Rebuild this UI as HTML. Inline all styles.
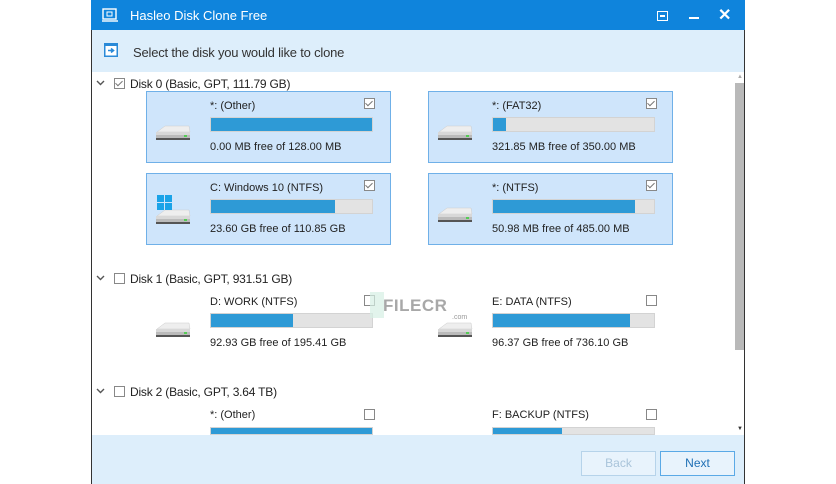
<!DOCTYPE html>
<html><head><meta charset="utf-8"><style>
*{margin:0;padding:0;box-sizing:border-box}
body{width:836px;height:484px;background:#fff;position:relative;overflow:hidden;font-family:"Liberation Sans",sans-serif;font-size:11px;color:#222}
.a{position:absolute}
.title{left:91px;top:0;width:654px;height:30px;background:#0f84dc;color:#fff;font-size:13px}
.hdr{left:92px;top:30px;width:652px;height:42px;background:#ddeefb}
.ftr{left:92px;top:435px;width:652px;height:49px;background:#ddeefb}
.card{width:245px;height:72px;background:#cfe5fb;border:1px solid #6fb0e8}
.bar{width:163px;height:15px;background:#e3e3e3;border:1px solid #d3d3d3}
.bar i{display:block;height:100%;background:#2e9ad6}
.cb{width:11px;height:11px;border:1px solid #888;background:#fff}
.cb.k::after{content:"";position:absolute;left:2px;top:0px;width:3px;height:6px;border:solid #777;border-width:0 1.3px 1.3px 0;transform:rotate(45deg)}
.btn{width:75px;height:25px;border:1px solid #5aa9e6;text-align:center;line-height:23px;font-size:12px;color:#1e6fb5;background:#e8f3fc}
.dh{font-size:12px;letter-spacing:-.2px}
</style></head><body>
<div class="a" style="left:91px;top:0;width:1px;height:484px;background:#333"></div>
<div class="a" style="left:744px;top:0;width:1px;height:484px;background:#333"></div>
<div class="a title">
 <svg class="a" style="left:11px;top:8px" width="16" height="14"><rect x="1" y="1" width="13" height="10" fill="none" stroke="#fff" stroke-width="1.4"/><rect x="5" y="4" width="5" height="4" fill="none" stroke="#fff"/><line x1="0" y1="13" x2="16" y2="13" stroke="#fff" stroke-width="1.4"/></svg>
 <span class="a" style="left:39px;top:8px">Hasleo Disk Clone Free</span>
 <svg class="a" style="left:566px;top:11px" width="11" height="10"><rect x="0.5" y="0.5" width="10" height="9" fill="none" stroke="#fff"/><rect x="3" y="4" width="5" height="2" fill="#fff"/></svg>
 <div class="a" style="left:598px;top:17px;width:10px;height:2px;background:#fff"></div>
 <span class="a" style="left:627px;top:5px;font-size:16px;font-weight:bold">✕</span>
</div>
<div class="a hdr">
 <svg class="a" style="left:12px;top:13px" width="14" height="14"><rect x="0" y="0" width="14" height="14" fill="#2a8ad8"/><rect x="1.5" y="3" width="11" height="9.5" fill="#fff"/><path d="M4 7.5h5M7 5.5l2.5 2-2.5 2" stroke="#2a8ad8" stroke-width="1.6" fill="none"/></svg>
 <span class="a" style="left:41px;top:15px;font-size:13px;color:#333;letter-spacing:-.2px">Select the disk you would like to clone</span>
</div>
<div class="a" style="left:735px;top:83px;width:9px;height:267px;background:#b9b9b9"></div>
<div class="a" style="left:737px;top:74px;font-size:6px;color:#aaa">▲</div>
<div class="a" style="left:737px;top:426px;font-size:6px;color:#333">▼</div>

<svg class="a" style="left:96px;top:80px" width="9" height="6"><path d="M1 1l3.5 3.5L8 1" stroke="#555" stroke-width="1.4" fill="none"/></svg>
<div class="a cb k" style="left:114px;top:78px"></div>
<div class="a dh" style="left:130px;top:77px">Disk 0 (Basic, GPT, 111.79 GB)</div>
<svg class="a" style="left:96px;top:275px" width="9" height="6"><path d="M1 1l3.5 3.5L8 1" stroke="#555" stroke-width="1.4" fill="none"/></svg>
<div class="a cb" style="left:114px;top:273px"></div>
<div class="a dh" style="left:130px;top:272px">Disk 1 (Basic, GPT, 931.51 GB)</div>
<svg class="a" style="left:96px;top:388px" width="9" height="6"><path d="M1 1l3.5 3.5L8 1" stroke="#555" stroke-width="1.4" fill="none"/></svg>
<div class="a cb" style="left:114px;top:386px"></div>
<div class="a dh" style="left:130px;top:385px">Disk 2 (Basic, GPT, 3.64 TB)</div>

<div class="a card" style="left:146px;top:91px"></div>
<div class="a card" style="left:428px;top:91px"></div>
<div class="a card" style="left:146px;top:173px"></div>
<div class="a card" style="left:428px;top:173px"></div>

<svg width="0" height="0" style="position:absolute"><defs><g id="hd"><path d="M2 7 L10 1 L34 1 L35 7 Z" fill="#eee" stroke="#ccc" stroke-width=".5"/><rect x="1" y="7" width="34" height="8" fill="#bbb"/><rect x="1" y="7" width="34" height="3" fill="#d8d8d8"/><rect x="1" y="13" width="34" height="2" fill="#555"/><rect x="29" y="10" width="3" height="2" fill="#5c5"/></g></defs></svg>

<div class="a" style="left:210px;top:100px">*: (Other)</div><div class="a cb k" style="left:364px;top:98px"></div>
<div class="a bar" style="left:210px;top:117px"><i style="width:100%"></i></div><div class="a" style="left:210px;top:141px">0.00 MB free of 128.00 MB</div>
<svg class="a" style="left:155px;top:125px" width="38" height="18"><use href="#hd"/></svg>

<div class="a" style="left:492px;top:100px">*: (FAT32)</div><div class="a cb k" style="left:646px;top:98px"></div>
<div class="a bar" style="left:492px;top:117px"><i style="width:8%"></i></div><div class="a" style="left:492px;top:141px">321.85 MB free of 350.00 MB</div>
<svg class="a" style="left:437px;top:125px" width="38" height="18"><use href="#hd"/></svg>

<div class="a" style="left:210px;top:182px">C: Windows 10 (NTFS)</div><div class="a cb k" style="left:364px;top:180px"></div>
<div class="a bar" style="left:210px;top:199px"><i style="width:77%"></i></div><div class="a" style="left:210px;top:223px">23.60 GB free of 110.85 GB</div>
<svg class="a" style="left:155px;top:209px" width="38" height="18"><use href="#hd"/></svg>
<svg class="a" style="left:157px;top:195px" width="16" height="16"><rect x="0" y="0" width="7" height="7" fill="#1aa3e8"/><rect x="8" y="0" width="7" height="7" fill="#1aa3e8"/><rect x="0" y="8" width="7" height="7" fill="#1aa3e8"/><rect x="8" y="8" width="7" height="7" fill="#1aa3e8"/></svg>

<div class="a" style="left:492px;top:182px">*: (NTFS)</div><div class="a cb k" style="left:646px;top:180px"></div>
<div class="a bar" style="left:492px;top:199px"><i style="width:88%"></i></div><div class="a" style="left:492px;top:223px">50.98 MB free of 485.00 MB</div>
<svg class="a" style="left:437px;top:207px" width="38" height="18"><use href="#hd"/></svg>

<div class="a" style="left:210px;top:296px">D: WORK (NTFS)</div><div class="a cb" style="left:364px;top:295px"></div>
<div class="a bar" style="left:210px;top:313px"><i style="width:51%"></i></div><div class="a" style="left:210px;top:337px">92.93 GB free of 195.41 GB</div>
<svg class="a" style="left:155px;top:322px" width="38" height="18"><use href="#hd"/></svg>

<div class="a" style="left:492px;top:296px">E: DATA (NTFS)</div><div class="a cb" style="left:646px;top:295px"></div>
<div class="a bar" style="left:492px;top:313px"><i style="width:85%"></i></div><div class="a" style="left:492px;top:337px">96.37 GB free of 736.10 GB</div>
<svg class="a" style="left:437px;top:322px" width="38" height="18"><use href="#hd"/></svg>

<div class="a" style="left:383px;top:296px;font-size:17px;font-weight:bold;color:#a8a8a8;letter-spacing:.5px">FILECR</div>
<div class="a" style="left:452px;top:314px;font-size:7px;color:#999">.com</div>
<div class="a" style="left:370px;top:292px;width:14px;height:26px;background:#d6efe4;opacity:.7"></div>

<div class="a" style="left:210px;top:409px">*: (Other)</div><div class="a cb" style="left:364px;top:409px"></div>
<div class="a bar" style="left:210px;top:427px;height:8px"><i style="width:100%"></i></div>
<div class="a" style="left:492px;top:409px">F: BACKUP (NTFS)</div><div class="a cb" style="left:646px;top:409px"></div>
<div class="a bar" style="left:492px;top:427px;height:8px"><i style="width:43%"></i></div>

<div class="a ftr">
 <div class="a btn" style="left:489px;top:16px;color:#a9c4da;border-color:#b6d3ea">Back</div>
 <div class="a btn" style="left:568px;top:16px">Next</div>
</div>
</body></html>
